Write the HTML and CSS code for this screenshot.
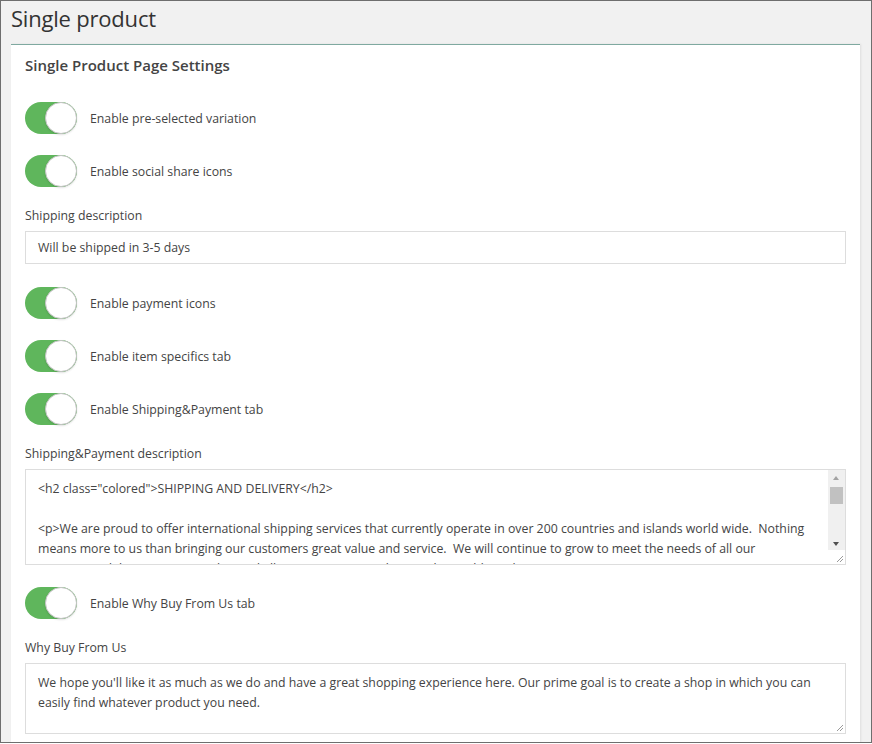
FILE: index.html
```html
<!DOCTYPE html>
<html>
<head>
<meta charset="utf-8">
<link rel="stylesheet" href="styles.css">
</head>
<body>
<div class="frame">
  <h1 class="page-title">Single product</h1>
  <div class="card">
    <h2 class="card-title">Single Product Page Settings</h2>

    <div class="toggle-row"><span class="toggle"><span class="knob"></span></span><span class="toggle-label">Enable pre-selected variation</span></div>
    <div class="toggle-row"><span class="toggle"><span class="knob"></span></span><span class="toggle-label">Enable social share icons</span></div>

    <div class="field">
      <label class="field-label">Shipping description</label>
      <div class="input">Will be shipped in 3-5 days</div>
    </div>

    <div class="toggle-row"><span class="toggle"><span class="knob"></span></span><span class="toggle-label">Enable payment icons</span></div>
    <div class="toggle-row"><span class="toggle"><span class="knob"></span></span><span class="toggle-label">Enable item specifics tab</span></div>
    <div class="toggle-row"><span class="toggle"><span class="knob"></span></span><span class="toggle-label">Enable Shipping&amp;Payment tab</span></div>

    <div class="field">
      <label class="field-label">Shipping&amp;Payment description</label>
      <div class="textarea ta-scroll">
        <div class="ta-text">&lt;h2 class="colored"&gt;SHIPPING AND DELIVERY&lt;/h2&gt;<br><br>&lt;p&gt;We are proud to offer international shipping services that currently operate in over 200 countries and islands world wide.&nbsp; Nothing means more to us than bringing our customers great value and service.&nbsp; We will continue to grow to meet the needs of all our customers, delivering a service beyond all expectations anywhere in the world we ship to.</div>
        <div class="scrollbar">
          <span class="sb-arrow up"></span>
          <span class="sb-thumb"></span>
          <span class="sb-arrow down"></span>
        </div>
        <svg class="grip" width="10" height="10" viewBox="0 0 10 10"><path d="M9 3 L3 9 M9 6 L6 9" stroke="#9a9a9a" stroke-width="1" fill="none"/></svg>
      </div>
    </div>

    <div class="toggle-row"><span class="toggle"><span class="knob"></span></span><span class="toggle-label">Enable Why Buy From Us tab</span></div>

    <div class="field">
      <label class="field-label">Why Buy From Us</label>
      <div class="textarea ta-why">
        <div class="ta-text">We hope you'll like it as much as we do and have a great shopping experience here. Our prime goal is to create a shop in which you can easily find whatever product you need.</div>
        <svg class="grip" width="10" height="10" viewBox="0 0 10 10"><path d="M9 3 L3 9 M9 6 L6 9" stroke="#9a9a9a" stroke-width="1" fill="none"/></svg>
      </div>
    </div>
  </div>
</div>
</body>
</html>
```
FILE: styles.css
```css
* { box-sizing: border-box; }
html, body { margin: 0; padding: 0; }
body {
  width: 872px;
  height: 744px;
  overflow: hidden;
  font-family: "Segoe UI", "Open Sans", "Noto Sans", sans-serif;
  color: #444;
  background: #fff;
}
.frame {
  width: 872px;
  height: 743px;
  border: 1px solid #6e6e6e;
  background: #f1f1f1;
  padding: 0 11px 0 10px;
  overflow: hidden;
}
.page-title {
  margin: 0;
  padding: 2px 0 0 0;
  height: 43px;
  font-size: 22px;
  font-weight: 400;
  color: #333;
  letter-spacing: -0.2px;
}
.card {
  background: #fff;
  border-top: 1px solid #7fa9a0;
  box-shadow: 1px 0 2px rgba(0,0,0,0.08);
  padding: 9px 14px 6px 14px;
  height: 720px;
}
.card-title {
  margin: 0 0 26px 0;
  font-size: 15px;
  font-weight: 600;
  color: #444;
  line-height: 22px;
}
.toggle-row {
  display: flex;
  align-items: center;
  height: 32px;
  margin-bottom: 21px;
}
.toggle {
  position: relative;
  display: inline-block;
  width: 52px;
  height: 32px;
  border-radius: 16px;
  background: #5fb65c;
  flex-shrink: 0;
}
.knob {
  position: absolute;
  right: 0;
  top: 0;
  width: 32px;
  height: 32px;
  border-radius: 50%;
  background: #fff;
  border: 1px solid #c4c4c4;
  box-shadow: 0 1px 2px rgba(0,0,0,0.12);
}
.toggle-label {
  margin-left: 13px;
  font-size: 12.3px;
  color: #444;
}
.field-label {
  display: block;
  font-size: 12.3px;
  color: #444;
  line-height: 18px;
  margin: -1px 0 6px 0;
}
.input {
  height: 33px;
  border: 1px solid #ddd;
  padding: 0 12px;
  font-size: 12.3px;
  line-height: 31px;
  color: #444;
  margin: 1px 0 23px 0;
}
.textarea {
  position: relative;
  border: 1px solid #ddd;
  font-size: 12.3px;
  line-height: 20px;
  color: #444;
  overflow: hidden;
}
.ta-text { padding: 9px 12px 0 12px; }
.ta-scroll { height: 96px; margin-bottom: 22px; }
.ta-scroll .ta-text { padding-right: 30px; }
.ta-why { height: 71px; }
.scrollbar {
  position: absolute;
  right: 0;
  top: 0;
  width: 17px;
  height: 80px;
  background: #f0f0f0;
}
.sb-arrow {
  position: absolute;
  left: 5px;
  width: 0; height: 0;
  border-left: 3.5px solid transparent;
  border-right: 3.5px solid transparent;
}
.sb-arrow.up { top: 6px; border-bottom: 4px solid #a3a3a3; }
.sb-arrow.down { bottom: 4px; border-top: 4px solid #505050; }
.sb-thumb {
  position: absolute;
  left: 2px;
  top: 17px;
  width: 13px;
  height: 17px;
  background: #c1c1c1;
}
.grip {
  position: absolute;
  right: 1px;
  bottom: 1px;
}
```
